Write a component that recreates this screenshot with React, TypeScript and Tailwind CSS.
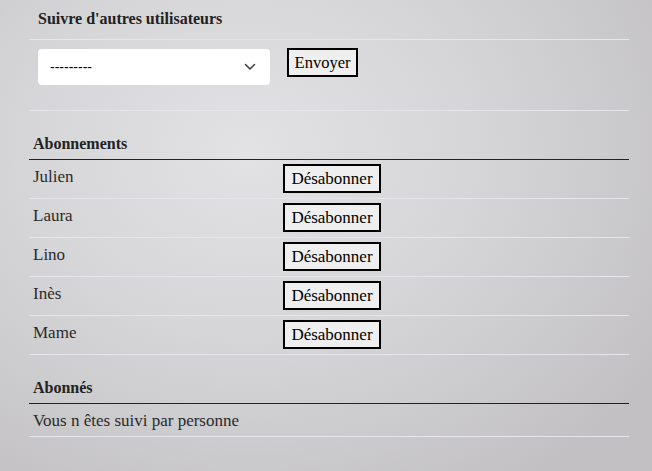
import React from "react";

const names = ["Julien", "Laura", "Lino", "Inès", "Mame"];

export default function App() {
  return (
    <div
      className="min-h-screen w-full font-[family-name:Liberation_Serif,Times_New_Roman,serif] text-[#222]"
      style={{
        background:
          "radial-gradient(ellipse 75% 85% at 38% 32%, #e2e2e5 0%, #d6d6d8 45%, #c2c0c2 100%)",
      }}
    >
      <div className="ml-[29px] w-[600px]">
        {/* Section 1 */}
        <div className="h-[40px] border-b border-[#e6e6ea] pl-[9px] pt-[7px] text-[16px] font-bold leading-[24px]">
          Suivre d'autres utilisateurs
        </div>
        <div className="flex h-[71px] items-start gap-[17px] border-b border-[#e6e6ea] pl-[9px] pt-[8px]">
          <div className="mt-[1px] flex h-[36px] w-[232px] items-center justify-between rounded-[4px] bg-white pl-[12px] pr-[14px] font-[family-name:Liberation_Sans,Arial,sans-serif] text-[14px] text-black">
            <span>---------</span>
            <svg width="12" height="8" viewBox="0 0 12 8" fill="none">
              <polyline
                points="1.5,1.5 6,6 10.5,1.5"
                stroke="#3a3a3a"
                strokeWidth="1.5"
                strokeLinecap="round"
                strokeLinejoin="round"
              />
            </svg>
          </div>
          <button className="flex h-[29px] w-[71px] items-center justify-center border-2 border-black bg-[#efefef] pt-[2px] text-[16.5px] leading-none text-black">
            Envoyer
          </button>
        </div>

        {/* Section 2 */}
        <div className="flex h-[49px] items-end border-b border-[#222] pb-[3px] pl-[4px] text-[16px] font-bold leading-[24px]">
          Abonnements
        </div>
        {names.map((n) => (
          <div
            key={n}
            className="flex h-[39px] items-start border-b border-[#e6e6ea]"
          >
            <div className="w-[254px] pl-[4px] pt-[5px] text-[17px] leading-[24px] text-[#2a2a2a]">
              {n}
            </div>
            <button className="mt-[4px] flex h-[29px] w-[98px] items-center justify-center border-2 border-black bg-[#efefef] text-[17px] leading-none text-black">
              Désabonner
            </button>
          </div>
        ))}

        {/* Section 3 */}
        <div className="flex h-[49px] items-end border-b border-[#222] pb-[3px] pl-[4px] text-[16px] font-bold leading-[24px]">
          Abonnés
        </div>
        <div className="h-[33px] border-b border-[#e6e6ea] pl-[4px] pt-[5px] text-[17px] leading-[24px] text-[#2a2a2a]">
          Vous n êtes suivi par personne
        </div>
      </div>
    </div>
  );
}
